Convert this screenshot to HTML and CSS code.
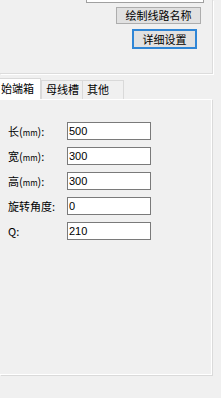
FILE: index.html
```html
<!DOCTYPE html>
<html lang="zh-CN">
<head>
    <meta charset="UTF-8">
    <meta name="viewport" content="width=device-width, initial-scale=1.0">
    <title>始端箱设置</title>
    <link rel="stylesheet" href="styles.css">
</head>
<body>
    <!-- Upper group with action buttons -->
    <div class="top-group">
        <div class="name-box"></div>
        <div class="btn-row">
            <button class="win-btn draw-btn">绘制线路名称</button>
        </div>
        <div class="btn-row">
            <button class="win-btn detail-btn">详细设置</button>
        </div>
    </div>

    <!-- Tabs -->
    <div class="tabs">
        <div class="tab active">始端箱</div>
        <div class="tab">母线槽</div>
        <div class="tab">其他</div>
    </div>

    <!-- Tab page -->
    <div class="tab-page">
        <div class="form-row">
            <label>长(<span class="unit">mm</span>):</label>
            <input type="text" value="500">
        </div>
        <div class="form-row">
            <label>宽(<span class="unit">mm</span>):</label>
            <input type="text" value="300">
        </div>
        <div class="form-row">
            <label>高(<span class="unit">mm</span>):</label>
            <input type="text" value="300">
        </div>
        <div class="form-row">
            <label>旋转角度:</label>
            <input type="text" value="0">
        </div>
        <div class="form-row">
            <label>Q:</label>
            <input type="text" value="210">
        </div>
    </div>
</body>
</html>
```

FILE: styles.css
```css
* {
    margin: 0;
    padding: 0;
    box-sizing: border-box;
    font-family: "Noto Sans CJK SC", "DejaVu Sans", sans-serif;
}

body {
    background: #f0f0f0;
    width: 221px;
    height: 398px;
    overflow: hidden;
    color: #000;
    font-size: 11px;
}

/* Upper group */
.top-group {
    width: 213px;
    height: 74px;
    border-right: 1px solid #dcdcdc;
    border-bottom: 1px solid #dcdcdc;
    box-shadow: 1px 1px 0 #fff;
    display: flex;
    flex-direction: column;
}

.name-box {
    margin-left: 86px;
    width: 118px;
    height: 3px;
    background: #fff;
    border: 1px solid #a0a0a0;
    border-top: none;
}

.btn-row {
    display: flex;
    justify-content: flex-end;
}

.win-btn {
    background: #e1e1e1;
    border: 1px solid #adadad;
    font-size: 11px;
    line-height: 13px;
    color: #000;
    font-family: "Noto Sans CJK SC", sans-serif;
    white-space: nowrap;
}

.draw-btn {
    margin-top: 4px;
    margin-right: 11px;
    width: 85px;
    height: 17px;
}

.detail-btn {
    margin-top: 5px;
    margin-right: 15px;
    width: 65px;
    height: 20px;
    border: 2px solid #2f86d6;
}

/* Tabs */
.tabs {
    display: flex;
    align-items: flex-end;
    margin-top: 4px;
    height: 21px;
}

.tab {
    height: 19px;
    padding: 0 4px;
    border: 1px solid #d9d9d9;
    border-bottom: none;
    margin-left: -1px;
    background: #f0f0f0;
    line-height: 17px;
    white-space: nowrap;
}

.tab.active {
    width: 41px;
    height: 21px;
    background: #fff;
    padding: 0 0 0 1px;
    margin-left: 0;
    border-left: none;
    line-height: 19px;
    position: relative;
    z-index: 1;
}

.tab:nth-child(2) {
    margin-left: 0;
    width: 42px;
}

.tab:nth-child(3) {
    width: 42px;
}

/* Tab page */
.tab-page {
    width: 212px;
    height: 276px;
    background: #f0f0f0;
    border-top: 1px solid #fff;
    border-right: 1px solid #fff;
    border-bottom: 1px solid #fff;
    box-shadow: 1px 1px 0 #dadada;
    padding-top: 22px;
    display: flex;
    flex-direction: column;
    gap: 7px;
}

.form-row {
    display: flex;
    align-items: center;
    height: 18px;
}

.form-row label {
    width: 67px;
    padding-left: 8px;
    white-space: nowrap;
}

.unit {
    font-size: 8px;
}

.form-row input {
    width: 84px;
    height: 18px;
    border: 1px solid #7a7a7a;
    background: #fff;
    padding: 0 1px;
    font-size: 11px;
    font-family: "Liberation Sans", sans-serif;
}
```
